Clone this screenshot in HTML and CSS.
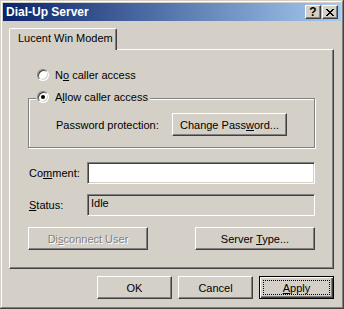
FILE: index.html
```html
<!DOCTYPE html>
<html lang="en">
<head>
    <meta charset="UTF-8">
    <title>Dial-Up Server</title>
    <link rel="stylesheet" href="styles.css">
</head>
<body>

    <div class="window">
        <!-- barra de titulo -->
        <div class="caption">
            <span class="caption-title">Dial-Up Server</span>
            <div class="caption-buttons">
                <span class="cap-btn cap-help">?</span>
                <span class="cap-btn">
                    <svg width="8" height="7" viewBox="0 0 8 7" shape-rendering="crispEdges">
                        <path d="M0 0h2v1H0zM6 0h2v1H6zM1 1h2v1H1zM5 1h2v1H5zM2 2h4v1H2zM3 3h2v1H3zM2 4h4v1H2zM1 5h2v1H1zM5 5h2v1H5zM0 6h2v1H0zM6 6h2v1H6z" fill="#000"/>
                    </svg>
                </span>
            </div>
        </div>

        <div class="dialog-body">
            <div class="tabs">
                <div class="tab">Lucent Win Modem</div>
            </div>

            <div class="panel">
                <div class="option">
                    <span class="radio"></span>
                    <span>N<u>o</u> caller access</span>
                </div>

                <fieldset class="group">
                    <legend class="option">
                        <span class="radio checked"></span>
                        <span>A<u>l</u>low caller access</span>
                    </legend>
                    <div class="pw-row">
                        <span class="pw-label">Password protection:</span>
                        <button class="btn btn-pw">Change Pass<u>w</u>ord...</button>
                    </div>
                </fieldset>

                <div class="field-row comment-row">
                    <span class="field-label">Co<u>m</u>ment:</span>
                    <div class="edit"></div>
                </div>

                <div class="field-row status-row">
                    <span class="field-label"><u>S</u>tatus:</span>
                    <div class="edit readonly">Idle</div>
                </div>

                <div class="panel-buttons">
                    <button class="btn btn-wide" disabled>Di<u>s</u>connect User</button>
                    <button class="btn btn-wide">Server <u>T</u>ype...</button>
                </div>
            </div>

            <!-- botoes do dialogo -->
            <div class="dialog-buttons">
                <button class="btn">OK</button>
                <button class="btn">Cancel</button>
                <button class="btn default"><u>A</u>pply</button>
            </div>
        </div>
    </div>

</body>
</html>
```

FILE: styles.css
```css
body {
    margin: 0;
    font-family: "Liberation Sans", Arial, sans-serif;
    font-size: 11px;
    color: #000;
}

.window {
    width: 344px;
    height: 309px;
    box-sizing: border-box;
    padding: 3px;
    background: #d4d0c8;
    box-shadow: inset -1px -1px #404040, inset 1px 1px #d4d0c8,
                inset -2px -2px #808080, inset 2px 2px #fff;
}

.caption {
    height: 18px;
    display: flex;
    align-items: center;
    justify-content: space-between;
    padding: 0 3px 0 3px;
    background: linear-gradient(to right, #0a246a, #a6caf0);
    color: #fff;
    font-weight: bold;
    font-size: 12px;
}

.caption-buttons {
    display: flex;
    gap: 1px;
}

.cap-btn {
    width: 16px;
    height: 14px;
    box-sizing: border-box;
    display: flex;
    align-items: center;
    justify-content: center;
    background: #d4d0c8;
    border: 1px solid;
    border-color: #fff #404040 #404040 #fff;
    box-shadow: inset -1px -1px #808080;
    color: #000;
}

.cap-help {
    font-size: 12px;
    line-height: 12px;
}

.dialog-body {
    padding: 7px 7px 0 6px;
}

.tabs {
    height: 21px;
    display: flex;
}

.tab {
    position: relative;
    z-index: 1;
    width: 108px;
    height: 22px;
    box-sizing: border-box;
    border: 1px solid;
    border-bottom: none;
    border-color: #fff #404040 transparent #fff;
    border-radius: 2px 2px 0 0;
    box-shadow: inset -1px 0 #808080;
    background: #d4d0c8;
    padding-left: 8px;
    line-height: 18px;
}

.panel {
    height: 220px;
    box-sizing: border-box;
    border: 1px solid;
    border-color: #fff #404040 #404040 #fff;
    box-shadow: inset -1px -1px #808080;
    padding: 18px 18px 0 18px;
}

.option {
    display: flex;
    align-items: center;
    gap: 6px;
    height: 13px;
    padding-left: 9px;
}

.radio {
    position: relative;
    width: 12px;
    height: 12px;
    box-sizing: border-box;
    border-radius: 50%;
    background: #fff;
    border: 1px solid;
    border-color: #808080 #fff #fff #808080;
    box-shadow: inset 1px 1px #404040, inset -1px -1px #d4d0c8;
}

.radio.checked::after {
    content: "";
    position: absolute;
    left: 3px;
    top: 3px;
    width: 4px;
    height: 4px;
    border-radius: 50%;
    background: #000;
}

.group {
    margin: 9px 0 0 0;
    min-width: 0;
    padding: 6px 0 11px 0;
    border: 1px solid #808080;
    box-shadow: 1px 1px #fff, inset 1px 1px #fff;
}

.group legend {
    margin-left: 7px;
    padding: 0 2px 4px 1px;
    background: #d4d0c8;
}

.pw-row {
    display: flex;
    align-items: center;
    padding-left: 27px;
}

.pw-label {
    width: 116px;
}

.btn {
    height: 23px;
    width: 75px;
    box-sizing: border-box;
    padding: 0;
    font-family: inherit;
    font-size: 11px;
    color: #000;
    background: #d4d0c8;
    border: 1px solid;
    border-color: #fff #404040 #404040 #fff;
    box-shadow: inset -1px -1px #808080;
}

.btn-pw {
    width: 115px;
}

.btn-wide {
    width: 120px;
}

.btn:disabled {
    color: #808080;
    text-shadow: 1px 1px #fff;
}

.btn.default {
    border-color: #000;
    box-shadow: inset 1px 1px #fff, inset -1px -1px #404040, inset -2px -2px #808080;
    outline: 1px dotted #000;
    outline-offset: -5px;
}

.field-row {
    display: flex;
    align-items: center;
    height: 22px;
}

.comment-row {
    margin-top: 14px;
}

.status-row {
    margin-top: 10px;
}

.field-label {
    width: 58px;
    padding-left: 1px;
}

.edit {
    flex: 1;
    height: 22px;
    box-sizing: border-box;
    background: #fff;
    border: 1px solid;
    border-color: #808080 #fff #fff #808080;
    box-shadow: inset 1px 1px #404040, inset -1px -1px #d4d0c8;
    padding: 2px 3px;
    line-height: 13px;
}

.edit.readonly {
    background: #d4d0c8;
}

.panel-buttons {
    display: flex;
    justify-content: space-between;
    margin-top: 11px;
}

.dialog-buttons {
    display: flex;
    justify-content: flex-end;
    gap: 6px;
    margin-top: 7px;
}
```
